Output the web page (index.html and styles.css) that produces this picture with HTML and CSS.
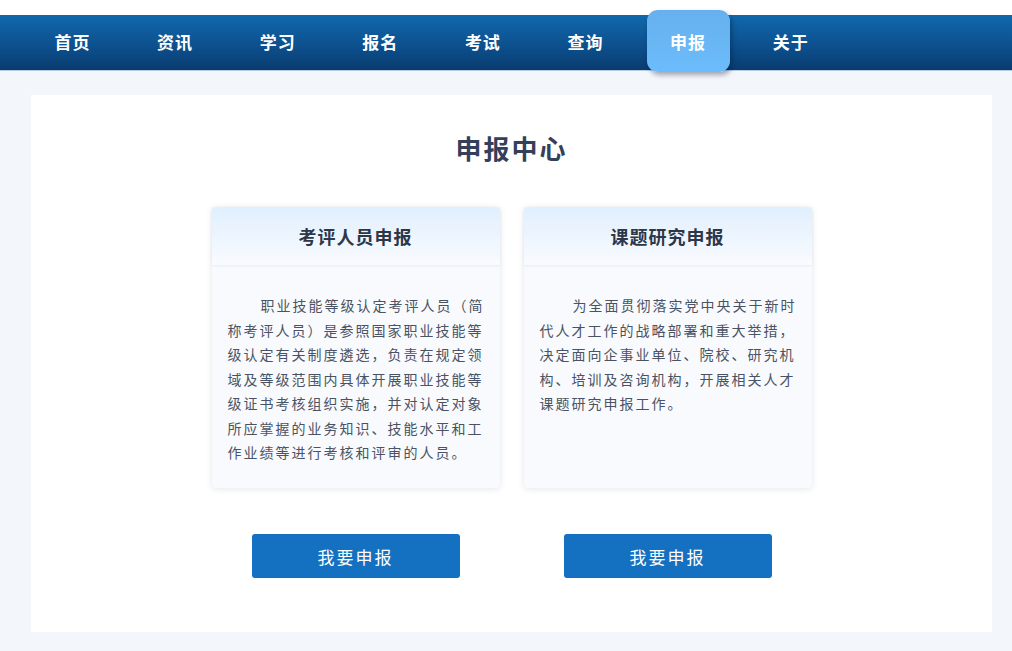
FILE: index.html
```html
<!DOCTYPE html>
<html lang="zh-CN">
<head>
  <meta charset="UTF-8">
  <meta name="viewport" content="width=device-width, initial-scale=1">
  <title>申报中心</title>
  <link rel="stylesheet" href="styles.css">
</head>
<body>

  <div class="top-strip"></div>
  <nav class="nav">
    <a class="nav-item" href="#">首页</a>
    <a class="nav-item" href="#">资讯</a>
    <a class="nav-item" href="#">学习</a>
    <a class="nav-item" href="#">报名</a>
    <a class="nav-item" href="#">考试</a>
    <a class="nav-item" href="#">查询</a>
    <a class="nav-item active" href="#">申报</a>
    <a class="nav-item" href="#">关于</a>
  </nav>

  <main class="panel">
    <h1 class="panel-title">申报中心</h1>

    <div class="cards">
      <div class="col">
        <div class="card">
          <div class="card-head">考评人员申报</div>
          <p class="card-body">职业技能等级认定考评人员（简称考评人员）是参照国家职业技能等级认定有关制度遴选，负责在规定领域及等级范围内具体开展职业技能等级证书考核组织实施，并对认定对象所应掌握的业务知识、技能水平和工作业绩等进行考核和评审的人员。</p>
        </div>
        <button class="btn">我要申报</button>
      </div>

      <div class="col">
        <div class="card">
          <div class="card-head">课题研究申报</div>
          <p class="card-body">为全面贯彻落实党中央关于新时代人才工作的战略部署和重大举措，决定面向企事业单位、院校、研究机构、培训及咨询机构，开展相关人才课题研究申报工作。</p>
        </div>
        <button class="btn">我要申报</button>
      </div>
    </div>
  </main>

</body>
</html>
```

FILE: styles.css
```css
body {
  margin: 0;
  background: #f3f6fb;
  font-family: "Noto Sans CJK SC", "Noto Sans", sans-serif;
  color: #2d3748;
}

.top-strip {
  height: 15px;
  background: #fff;
}

.nav {
  display: flex;
  gap: 19.6px;
  height: 55px;
  padding-left: 31px;
  background: linear-gradient(#1168ac, #0b4a85 70%, #093c6e);
  border-bottom: 1px solid #b9cde2;
}

.nav-item {
  width: 83px;
  padding-bottom: 2px;
  box-sizing: border-box;
  display: flex;
  align-items: center;
  justify-content: center;
  color: #fff;
  text-decoration: none;
  font-size: 17px;
  font-weight: bold;
  letter-spacing: 1px;
}

.nav-item.active {
  margin-top: -5px;
  height: 62px;
  padding-bottom: 0;
  background: linear-gradient(#66b0ee, #6cbcfb);
  border-radius: 11px;
  box-shadow: 2px 3px 5px rgba(0, 20, 50, 0.35);
}

.panel {
  margin: 24px 20px 19px 31px;
  background: #fff;
  padding: 34px 0 54px;
}

.panel-title {
  margin: 0 0 40px;
  text-align: center;
  font-size: 26px;
  line-height: 38px;
  letter-spacing: 2px;
  color: #34405a;
}

.cards {
  display: flex;
  justify-content: center;
  gap: 24px;
}

.col {
  width: 288px;
  display: flex;
  flex-direction: column;
  align-items: center;
}

.card {
  width: 100%;
  height: 281px;
  background: #f8fafd;
  border-radius: 4px;
  box-shadow: 0 1px 6px rgba(30, 50, 90, 0.12);
  display: flex;
  flex-direction: column;
}

.card-head {
  height: 58px;
  flex-shrink: 0;
  display: flex;
  align-items: center;
  justify-content: center;
  font-size: 18px;
  font-weight: bold;
  letter-spacing: 1px;
  color: #2d3748;
  background: linear-gradient(#e0effd, #f9fbff);
  border-radius: 4px 4px 0 0;
  box-shadow: 0 1px 3px rgba(30, 50, 90, 0.08);
}

.card-body {
  margin: 0;
  padding: 28px 14px 0 16px;
  font-size: 14px;
  line-height: 24.5px;
  letter-spacing: 2px;
  text-indent: 33px;
  color: #4a5363;
}

.btn {
  margin-top: 46px;
  width: 208px;
  height: 44px;
  border: none;
  border-radius: 3px;
  background: #1470c0;
  color: #fff;
  font-family: inherit;
  font-size: 17px;
  letter-spacing: 2px;
  cursor: pointer;
}
```
